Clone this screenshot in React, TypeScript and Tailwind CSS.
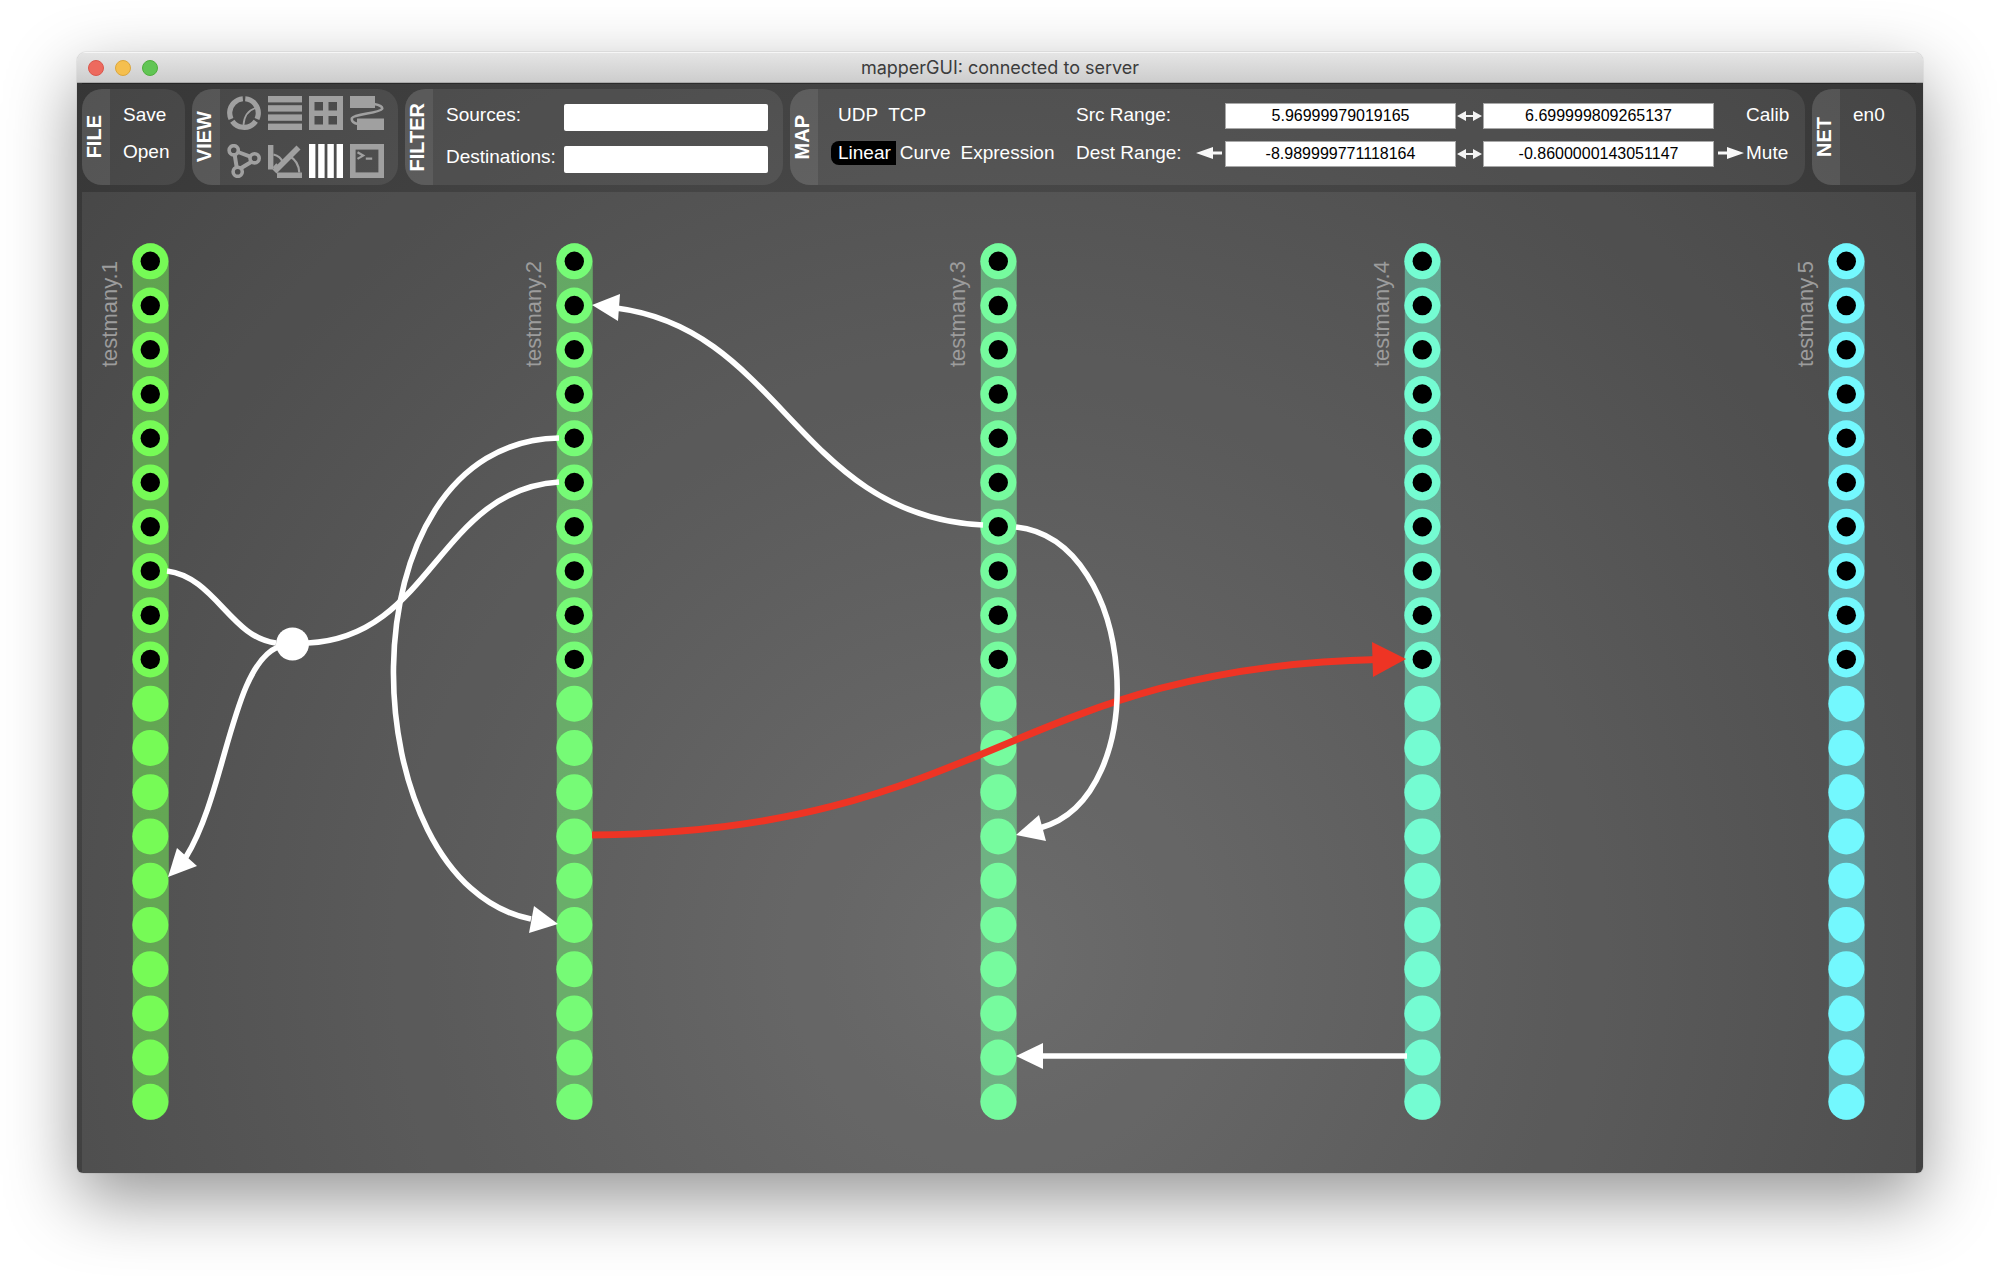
import type { ReactNode } from "react";

const deviceColors = ["#76fb56", "#76fb76", "#76fb9e", "#74fcd2", "#73f8fe"];
const COLUMN_GAP = 424;
const ROW_GAP = 44.24;
const FIRST_ROW = 69.3;
const SIGNALS = 20;
const OUTPUTS = 10;

function Panel({ name, className, children }: { name: string; className: string; children: ReactNode }) {
  return (
    <section aria-label={name} className={`flex h-24 overflow-hidden rounded-[20px] bg-white/8 ${className}`}>
      <h2 className="flex w-7 shrink-0 items-center justify-center bg-white/8 pr-1 text-xl leading-6 font-bold">
        <span className="rotate-180 [writing-mode:vertical-rl]">{name}</span>
      </h2>
      {children}
    </section>
  );
}

function Icon({ children }: { children: ReactNode }) {
  return (
    <svg viewBox="0 0 34 34" className="size-[34px]" fill="none" stroke="currentColor" aria-hidden="true">
      {children}
    </svg>
  );
}

const bars = [0, 9.2, 18.4, 27.6];

const views: { name: string; active?: boolean; icon: ReactNode }[] = [
  {
    name: "Chord view",
    icon: (
      <>
        <circle cx="17" cy="17" r="14.3" strokeWidth="5.2" pathLength="360" strokeDasharray="110 10" transform="rotate(-85 17 17)" />
        <path d="M16.5 29C17 21 21 14.5 28.5 12" strokeWidth="1.8" />
      </>
    ),
  },
  {
    name: "List view",
    icon: <>{bars.map((y) => <rect key={y} x="0" y={y} width="34" height="6.4" fill="currentColor" stroke="none" />)}</>,
  },
  {
    name: "Grid view",
    icon: <path d="M0 0H34V34H0ZM5.5 6V14.5H14V6ZM19.5 6V14.5H28V6ZM5.5 20V28.5H14V20ZM19.5 20V28.5H28V20Z" fill="currentColor" fillRule="evenodd" stroke="none" />,
  },
  {
    name: "Parallel view",
    icon: (
      <>
        <path d="M0 0H25V12H0ZM7 22.5H34V34H7Z" fill="currentColor" stroke="none" />
        <path d="M24 8C30 9 33 11 32 13C30 17 4 18 2 22C1 25 4 27.5 8 28" strokeWidth="2.6" />
      </>
    ),
  },
  {
    name: "Graph view",
    icon: (
      <>
        <g strokeWidth="3.6">
          <circle cx="6.7" cy="6.3" r="4.6" />
          <circle cx="27.6" cy="14.3" r="4.6" />
          <circle cx="10.7" cy="27.8" r="4.6" />
        </g>
        <path d="M11 8L23.3 12.6M24.6 17.7L13.8 24.3M7.7 11L9.7 23.2" strokeWidth="4" />
      </>
    ),
  },
  {
    name: "Hive view",
    icon: (
      <>
        <path d="M0 1H5.4V25.5H0ZM9 28.5H34V34H9Z" fill="currentColor" stroke="none" />
        <path d="M6.5 27.5L30.5 3.5" strokeWidth="5.6" />
        <path d="M5.5 10.5Q12.5 12 14.8 18.5M22 12.5Q30.5 17 31.3 28.5" strokeWidth="2.2" />
        <path d="M5.5 24L9 20" strokeWidth="2" />
      </>
    ),
  },
  {
    name: "Linear view",
    active: true,
    icon: <>{bars.map((x) => <rect key={x} x={x} y="0" width="6.4" height="34" fill="currentColor" stroke="none" />)}</>,
  },
  {
    name: "Console view",
    icon: (
      <>
        <rect x="2.8" y="2.8" width="28.4" height="28.4" strokeWidth="5.6" />
        <path d="M7.5 8.3L13.2 11.6L7.5 14.9M15.8 14.6H22.2" strokeWidth="2.2" />
      </>
    ),
  },
];

function TextButton({ children }: { children: ReactNode }) {
  return <button type="button" className="leading-6">{children}</button>;
}

function SwapArrow() {
  return (
    <svg viewBox="0 0 27 14" className="h-3.5 w-[27px]" fill="#f4f4f4" aria-hidden="true">
      <path d="M1 7L10 2V6H17V2L26 7L17 12V8H10V12Z" />
    </svg>
  );
}

function BoundaryArrow({ flip = false }: { flip?: boolean }) {
  return (
    <svg viewBox="0 0 27 14" className={flip ? "h-3.5 w-[27px] rotate-180" : "h-3.5 w-[27px]"} fill="#f8f8f8" aria-hidden="true">
      <path d="M0 7L17 1V5.5H26V8.5H17V13Z" />
    </svg>
  );
}

function RangeInput({ id, label, value }: { id: string; label?: string; value: string }) {
  return (
    <input
      id={id}
      aria-label={label}
      defaultValue={value}
      className="h-[26px] w-full min-w-0 border border-[#a8a8a8] bg-white pb-px text-center text-base text-black"
    />
  );
}

function Device({ index }: { index: number }) {
  const cx = 68.3 + index * COLUMN_GAP;
  const color = deviceColors[index];
  return (
    <g>
      <rect x={cx - 17.5} y={FIRST_ROW - 18} width="36" height={ROW_GAP * (SIGNALS - 1) + 36} rx="18" fill={color} opacity="0.5" />
      {Array.from({ length: SIGNALS }, (_, row) => (
        <g key={row}>
          <circle cx={cx} cy={FIRST_ROW + row * ROW_GAP} r="18" fill={color} />
          {row < OUTPUTS && <circle cx={cx} cy={FIRST_ROW + row * ROW_GAP} r="9.7" fill="#000" />}
        </g>
      ))}
      <text transform={`translate(${cx - 33} 175) rotate(-90)`} fontSize="22" fill="#9c9c9c">
        {`testmany.${index + 1}`}
      </text>
    </g>
  );
}

function MapCanvas() {
  return (
    <svg viewBox="0 0 1834 981" className="block h-auto w-full bg-white/8" role="img" aria-label="Signal maps between devices">
      {deviceColors.map((color, i) => (
        <Device key={color} index={i} />
      ))}
      <g fill="none" stroke="#ee3424" strokeWidth="7">
        <path d="M510 643C900 640 930 475 1296 467.5" />
        <path d="M1324 467L1290 450L1291 485Z" fill="#ee3424" stroke="none" />
      </g>
      <g fill="none" stroke="#fff" strokeWidth="5.6">
        <path d="M901 333C716 324 700 137 534 116" />
        <path d="M477 246C254 250 268 692 449 727" />
        <path d="M477 290C356 298 350 445 226 451" />
        <path d="M85 379C133 385 149 446 194 451" />
        <path d="M196 455C150 474 144 600 104 665" />
        <path d="M934 335C1056 348 1072 605 958 636" />
        <path d="M1325 864H955" />
      </g>
      <g fill="#fff">
        <circle cx="210.5" cy="452" r="16.5" />
        <path d="M510 113L538 102L536 129Z" />
        <path d="M476 732L452 714L447 741Z" />
        <path d="M86 685L95 656L115 674Z" />
        <path d="M934 643L957 623L964 649Z" />
        <path d="M934 864L961 851V877Z" />
      </g>
    </svg>
  );
}

export default function App() {
  return (
    <main className="min-h-screen bg-white px-[77px] pt-[52px] pb-[102px] [font-family:'Liberation_Sans',Arial,sans-serif]">
      <div className="overflow-hidden rounded-t-[9px] rounded-b-md shadow-[0_26px_70px_rgba(0,0,0,0.42),0_0_1px_rgba(0,0,0,0.5)]">
        <header className="grid h-[31px] grid-cols-[1fr_auto_1fr] items-center border-b border-[#a9a9a9] bg-linear-to-b from-[#e6e6e6] to-[#cdcdcd] pt-px shadow-[inset_0_1px_0_#f6f6f6]">
          <div className="flex gap-[11px] pl-[11px]">
            <button type="button" aria-label="Close" className="size-4 rounded-full border border-[#d9584d] bg-[#ed6a5e]" />
            <button type="button" aria-label="Minimize" className="size-4 rounded-full border border-[#dba63c] bg-[#f5bf4f]" />
            <button type="button" aria-label="Zoom" className="size-4 rounded-full border border-[#4fae3d] bg-[#61c554]" />
          </div>
          <h1 className="text-lg leading-6 text-[#3c3c3c] [font-family:Inter,sans-serif]">mapperGUI: connected to server</h1>
        </header>

        <div className="bg-[radial-gradient(circle_at_50%_80%,#606060,#363636)] pr-[7px] pl-[5px]">
          <div className="flex gap-[7px] border-t border-black/30 pt-[5px] pb-[7px] text-[19px] leading-6 text-white">
            <Panel name="FILE" className="w-[103px]">
              <div className="grid auto-rows-[37px] items-center justify-items-start pt-[7px] pl-[13px]">
                <TextButton>Save</TextButton>
                <TextButton>Open</TextButton>
              </div>
            </Panel>

            <Panel name="VIEW" className="w-[206px]">
              <div className="grid grid-cols-4 content-start gap-x-[7px] gap-y-3.5 pt-[7px] pl-[7px]">
                {views.map((view) => (
                  <button
                    key={view.name}
                    type="button"
                    aria-label={view.name}
                    aria-pressed={!!view.active}
                    className={view.active ? "size-[34px] text-white" : "size-[34px] text-[#a0a0a0]"}
                  >
                    <Icon>{view.icon}</Icon>
                  </button>
                ))}
              </div>
            </Panel>

            <Panel name="FILTER" className="w-[378px]">
              <div className="grid flex-1 auto-rows-[42px] grid-cols-[118px_1fr] items-center pt-[7px] pr-[15px] pl-[13px]">
                <label htmlFor="filter-sources" className="pb-1">Sources:</label>
                <input id="filter-sources" className="h-[27px] w-full min-w-0 rounded-xs bg-white px-2 text-black" />
                <label htmlFor="filter-destinations" className="pb-1">Destinations:</label>
                <input id="filter-destinations" className="h-[27px] w-full min-w-0 rounded-xs bg-white px-2 text-black" />
              </div>
            </Panel>

            <Panel name="MAP" className="flex-1">
              <div className="grid flex-1 auto-rows-[38px] grid-cols-[245px_120px_29px_minmax(0,1fr)_27px_minmax(0,1fr)_32px_59px] items-center pt-2 pl-[13px]">
                <div className="flex gap-[10px] pb-[3px] pl-[7px]">
                  <TextButton>UDP</TextButton>
                  <TextButton>TCP</TextButton>
                </div>
                <label htmlFor="src-min" className="pb-[3px]">Src Range:</label>
                <span />
                <RangeInput id="src-min" value="5.96999979019165" />
                <button type="button" aria-label="Swap source range"><SwapArrow /></button>
                <RangeInput id="src-max" label="Source maximum" value="6.699999809265137" />
                <span />
                <div className="pb-[3px]"><TextButton>Calib</TextButton></div>

                <div className="flex pb-[3px]">
                  <button type="button" aria-pressed="true" className="mr-1 rounded-l-lg bg-black pr-[5px] pl-[7px] leading-6">Linear</button>
                  <div className="flex gap-[10px]">
                    <TextButton>Curve</TextButton>
                    <TextButton>Expression</TextButton>
                  </div>
                </div>
                <label htmlFor="dest-min" className="pb-[3px]">Dest Range:</label>
                <button type="button" aria-label="Minimum boundary" className="pb-[3px]"><BoundaryArrow /></button>
                <RangeInput id="dest-min" value="-8.989999771118164" />
                <button type="button" aria-label="Swap destination range"><SwapArrow /></button>
                <RangeInput id="dest-max" label="Destination maximum" value="-0.8600000143051147" />
                <button type="button" aria-label="Maximum boundary" className="justify-self-center pb-[3px]"><BoundaryArrow flip /></button>
                <div className="pb-[3px]"><TextButton>Mute</TextButton></div>
              </div>
            </Panel>

            <Panel name="NET" className="w-[104px]">
              <div className="grid auto-rows-[37px] items-center pt-[7px] pl-[13px]">
                <TextButton>en0</TextButton>
              </div>
            </Panel>
          </div>

          <MapCanvas />
        </div>
      </div>
    </main>
  );
}
